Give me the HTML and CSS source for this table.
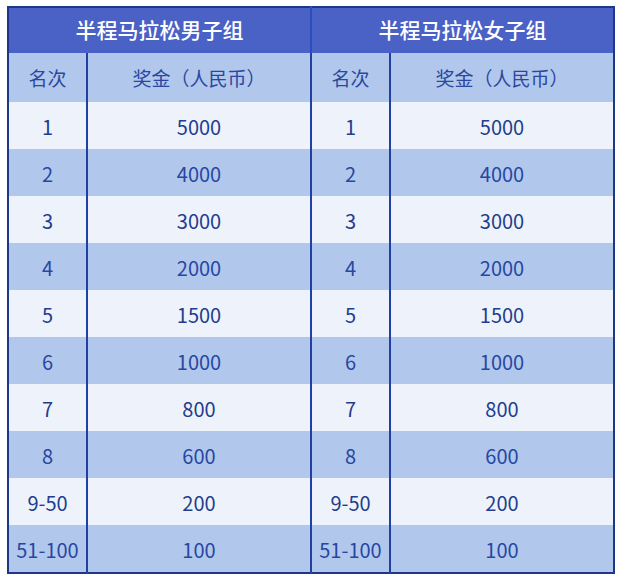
FILE: index.html
```html
<!DOCTYPE html>
<html lang="zh-CN">
<head>
<meta charset="utf-8">
<link rel="stylesheet" href="styles.css">
</head>
<body>
<div class="wrap">
<table class="prize">
  <colgroup>
    <col class="c-rank"><col class="c-money"><col class="c-rank"><col class="c-money">
  </colgroup>
  <thead>
    <tr class="title">
      <th colspan="2" class="sep">半程马拉松男子组</th>
      <th colspan="2">半程马拉松女子组</th>
    </tr>
    <tr class="sub">
      <th class="div">名次</th><th class="sep">奖金（人民币）</th>
      <th class="div">名次</th><th>奖金（人民币）</th>
    </tr>
  </thead>
  <tbody>
    <tr class="l"><td class="div">1</td><td class="sep">5000</td><td class="div">1</td><td>5000</td></tr>
    <tr class="d"><td class="div">2</td><td class="sep">4000</td><td class="div">2</td><td>4000</td></tr>
    <tr class="l"><td class="div">3</td><td class="sep">3000</td><td class="div">3</td><td>3000</td></tr>
    <tr class="d"><td class="div">4</td><td class="sep">2000</td><td class="div">4</td><td>2000</td></tr>
    <tr class="l"><td class="div">5</td><td class="sep">1500</td><td class="div">5</td><td>1500</td></tr>
    <tr class="d"><td class="div">6</td><td class="sep">1000</td><td class="div">6</td><td>1000</td></tr>
    <tr class="l"><td class="div">7</td><td class="sep">800</td><td class="div">7</td><td>800</td></tr>
    <tr class="d"><td class="div">8</td><td class="sep">600</td><td class="div">8</td><td>600</td></tr>
    <tr class="l"><td class="div">9-50</td><td class="sep">200</td><td class="div">9-50</td><td>200</td></tr>
    <tr class="d"><td class="div">51-100</td><td class="sep">100</td><td class="div">51-100</td><td>100</td></tr>
  </tbody>
</table>
</div>
</body>
</html>
```

FILE: styles.css
```css
html, body {
  margin: 0;
  padding: 0;
  background: #ffffff;
}
.wrap {
  padding: 6px 0 0 7px;
}
.prize {
  border-collapse: collapse;
  table-layout: fixed;
  width: 606px;
  border: 2px solid #1d3888;
  font-family: "Noto Sans CJK SC", "Noto Sans", sans-serif;
}
.c-rank { width: 79px; }
.c-money { width: 224px; }
.prize th, .prize td {
  padding: 0;
  text-align: center;
  vertical-align: middle;
}
.title th {
  height: 42px;
  padding-bottom: 3px;
  background: #4a61c6;
  color: #ffffff;
  font-size: 21px;
  font-weight: 500;
}
.sub th {
  height: 49px;
  background: #b1c8ec;
  color: #2b479f;
  font-size: 19px;
  font-weight: 400;
}
.prize td {
  height: 46px;
  padding-top: 1px;
  font-size: 20px;
  color: #233d8e;
}
.l td { background: #eef3fb; }
.d td { background: #b1c8ec; color: #2747a2; }
.div { border-right: 2px solid #2040a4; }
.sep { border-right: 2px solid #2040a4; }
.title .sep { border-right-color: #2b4dc0; }
```
